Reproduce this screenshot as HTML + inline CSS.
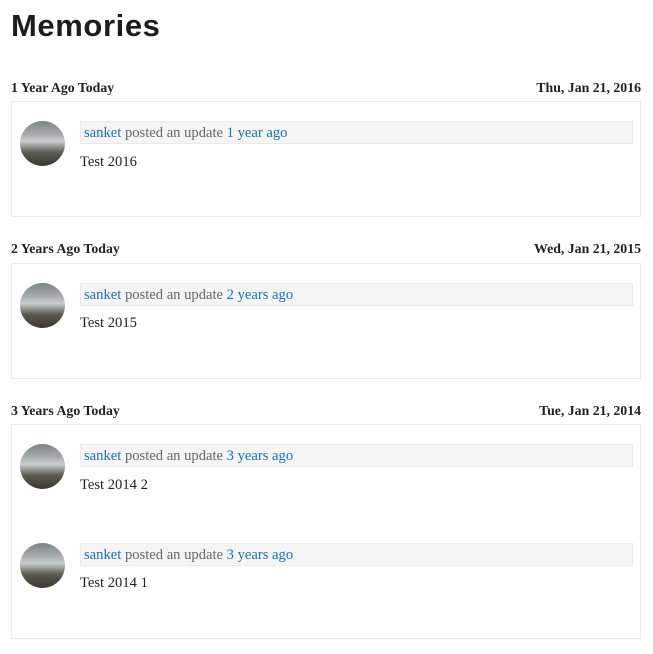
<!DOCTYPE html>
<html><head><style>
body{margin:0;width:653px;height:654px;background:#fff;position:relative;font-family:"Liberation Serif",serif;color:#222;overflow:hidden}
.a{position:absolute}
h1{position:absolute;left:11px;top:8px;margin:0;font:bold 31px "Liberation Sans",sans-serif;color:#1c1c1c;letter-spacing:0.6px}
.hd{font-weight:bold;font-size:13.8px;color:#222}
.box{border:1px solid #ebebeb;left:11px;width:628px}
.bar{left:80px;background:#f5f5f5;border:1px solid #eaeaea;font-size:14.6px;line-height:22px;color:#666;padding-left:3px;box-sizing:border-box;width:553px;height:23px}
.bar b{font-weight:normal;color:#1a6fb5}
.av{left:20px;width:45px;height:45px;border-radius:50%;background:linear-gradient(180deg,#7c8384 0%,#a8aeb0 30%,#c9cccc 45%,#9b9f9a 55%,#5a5a50 70%,#3a3630 100%);overflow:hidden}
.tx{left:80px;font-size:14.6px;color:#222}
</style></head><body>
<h1>Memories</h1>

<div class="a hd" style="left:11px;top:80px">1 Year Ago Today</div>
<div class="a hd" style="right:12px;top:80px">Thu, Jan 21, 2016</div>
<div class="a box" style="top:101px;height:114px"></div>
<div class="a bar" style="top:121px"><b>sanket</b> posted an update <b>1 year ago</b></div>
<div class="a av" style="top:121px"></div>
<div class="a tx" style="top:154px">Test 2016</div>

<div class="a hd" style="left:11px;top:241px">2 Years Ago Today</div>
<div class="a hd" style="right:12px;top:241px">Wed, Jan 21, 2015</div>
<div class="a box" style="top:263px;height:114px"></div>
<div class="a bar" style="top:283px"><b>sanket</b> posted an update <b>2 years ago</b></div>
<div class="a av" style="top:283px"></div>
<div class="a tx" style="top:315px">Test 2015</div>

<div class="a hd" style="left:11px;top:403px">3 Years Ago Today</div>
<div class="a hd" style="right:12px;top:403px">Tue, Jan 21, 2014</div>
<div class="a box" style="top:424px;height:213px"></div>
<div class="a bar" style="top:444px"><b>sanket</b> posted an update <b>3 years ago</b></div>
<div class="a av" style="top:444px"></div>
<div class="a tx" style="top:477px">Test 2014 2</div>
<div class="a bar" style="top:543px"><b>sanket</b> posted an update <b>3 years ago</b></div>
<div class="a av" style="top:543px"></div>
<div class="a tx" style="top:575px">Test 2014 1</div>
</body></html>
